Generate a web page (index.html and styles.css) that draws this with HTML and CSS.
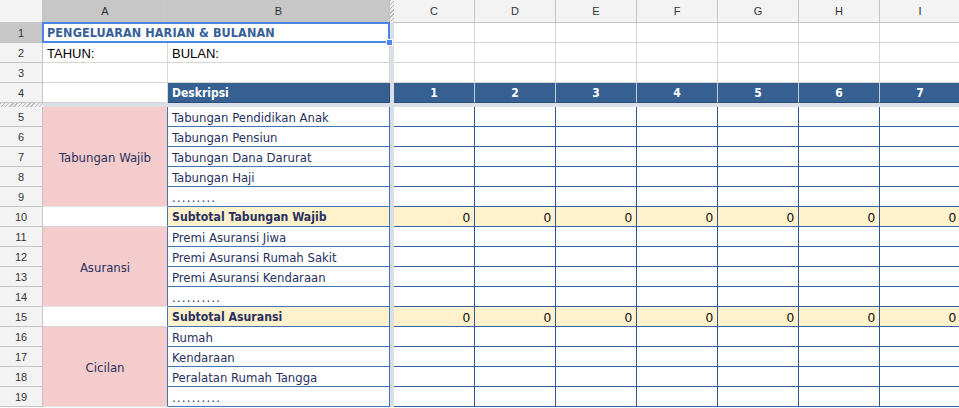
FILE: index.html
```html
<!DOCTYPE html>
<html lang="id">
<head>
<meta charset="utf-8">
<title>Pengeluaran Harian &amp; Bulanan</title>
<link rel="stylesheet" href="styles.css">
</head>
<body>
<div class="sheet">
  <!-- column headers -->
  <div class="corner"></div>
  <div class="ch sel">A</div>
  <div class="ch sel">B</div>
  <div class="fz hatch"></div>
  <div class="ch">C</div><div class="ch">D</div><div class="ch">E</div><div class="ch">F</div><div class="ch">G</div><div class="ch">H</div><div class="ch">I</div>

  <!-- row 1 -->
  <div class="rh sel">1</div>
  <div class="c title span2">PENGELUARAN HARIAN &amp; BULANAN</div>
  <div class="fz"></div>
  <div class="c"></div><div class="c"></div><div class="c"></div><div class="c"></div><div class="c"></div><div class="c"></div><div class="c"></div>

  <!-- row 2 -->
  <div class="rh">2</div>
  <div class="c plain">TAHUN:</div>
  <div class="c plain">BULAN:</div>
  <div class="fz"></div>
  <div class="c"></div><div class="c"></div><div class="c"></div><div class="c"></div><div class="c"></div><div class="c"></div><div class="c"></div>

  <!-- row 3 -->
  <div class="rh">3</div>
  <div class="c"></div>
  <div class="c"></div>
  <div class="fz"></div>
  <div class="c"></div><div class="c"></div><div class="c"></div><div class="c"></div><div class="c"></div><div class="c"></div><div class="c"></div>

  <!-- row 4 -->
  <div class="rh">4</div>
  <div class="c"></div>
  <div class="c hd">Deskripsi</div>
  <div class="fz"></div>
  <div class="c hd day">1</div><div class="c hd day">2</div><div class="c hd day">3</div><div class="c hd day">4</div><div class="c hd day">5</div><div class="c hd day">6</div><div class="c hd day">7</div>

  <!-- freeze row -->
  <div class="hatch"></div>
  <div class="frow"></div>

  <!-- rows 5-9 -->
  <div class="rh">5</div>
  <div class="c cat span5">Tabungan Wajib</div>
  <div class="c desc">Tabungan Pendidikan Anak</div>
  <div class="fz"></div>
  <div class="c n"></div><div class="c n"></div><div class="c n"></div><div class="c n"></div><div class="c n"></div><div class="c n"></div><div class="c n"></div>

  <div class="rh">6</div>
  <div class="c desc">Tabungan Pensiun</div>
  <div class="fz"></div>
  <div class="c n"></div><div class="c n"></div><div class="c n"></div><div class="c n"></div><div class="c n"></div><div class="c n"></div><div class="c n"></div>

  <div class="rh">7</div>
  <div class="c desc">Tabungan Dana Darurat</div>
  <div class="fz"></div>
  <div class="c n"></div><div class="c n"></div><div class="c n"></div><div class="c n"></div><div class="c n"></div><div class="c n"></div><div class="c n"></div>

  <div class="rh">8</div>
  <div class="c desc">Tabungan Haji</div>
  <div class="fz"></div>
  <div class="c n"></div><div class="c n"></div><div class="c n"></div><div class="c n"></div><div class="c n"></div><div class="c n"></div><div class="c n"></div>

  <div class="rh">9</div>
  <div class="c desc dots">.........</div>
  <div class="fz"></div>
  <div class="c n"></div><div class="c n"></div><div class="c n"></div><div class="c n"></div><div class="c n"></div><div class="c n"></div><div class="c n"></div>

  <!-- row 10 -->
  <div class="rh">10</div>
  <div class="c blank"></div>
  <div class="c desc subl">Subtotal Tabungan Wajib</div>
  <div class="fz"></div>
  <div class="c n sub">0</div><div class="c n sub">0</div><div class="c n sub">0</div><div class="c n sub">0</div><div class="c n sub">0</div><div class="c n sub">0</div><div class="c n sub">0</div>

  <!-- rows 11-14 -->
  <div class="rh">11</div>
  <div class="c cat span4">Asuransi</div>
  <div class="c desc">Premi Asuransi Jiwa</div>
  <div class="fz"></div>
  <div class="c n"></div><div class="c n"></div><div class="c n"></div><div class="c n"></div><div class="c n"></div><div class="c n"></div><div class="c n"></div>

  <div class="rh">12</div>
  <div class="c desc">Premi Asuransi Rumah Sakit</div>
  <div class="fz"></div>
  <div class="c n"></div><div class="c n"></div><div class="c n"></div><div class="c n"></div><div class="c n"></div><div class="c n"></div><div class="c n"></div>

  <div class="rh">13</div>
  <div class="c desc">Premi Asuransi Kendaraan</div>
  <div class="fz"></div>
  <div class="c n"></div><div class="c n"></div><div class="c n"></div><div class="c n"></div><div class="c n"></div><div class="c n"></div><div class="c n"></div>

  <div class="rh">14</div>
  <div class="c desc dots">..........</div>
  <div class="fz"></div>
  <div class="c n"></div><div class="c n"></div><div class="c n"></div><div class="c n"></div><div class="c n"></div><div class="c n"></div><div class="c n"></div>

  <!-- row 15 -->
  <div class="rh">15</div>
  <div class="c blank"></div>
  <div class="c desc subl">Subtotal Asuransi</div>
  <div class="fz"></div>
  <div class="c n sub">0</div><div class="c n sub">0</div><div class="c n sub">0</div><div class="c n sub">0</div><div class="c n sub">0</div><div class="c n sub">0</div><div class="c n sub">0</div>

  <!-- rows 16-19 -->
  <div class="rh">16</div>
  <div class="c cat span4">Cicilan</div>
  <div class="c desc">Rumah</div>
  <div class="fz"></div>
  <div class="c n"></div><div class="c n"></div><div class="c n"></div><div class="c n"></div><div class="c n"></div><div class="c n"></div><div class="c n"></div>

  <div class="rh">17</div>
  <div class="c desc">Kendaraan</div>
  <div class="fz"></div>
  <div class="c n"></div><div class="c n"></div><div class="c n"></div><div class="c n"></div><div class="c n"></div><div class="c n"></div><div class="c n"></div>

  <div class="rh">18</div>
  <div class="c desc">Peralatan Rumah Tangga</div>
  <div class="fz"></div>
  <div class="c n"></div><div class="c n"></div><div class="c n"></div><div class="c n"></div><div class="c n"></div><div class="c n"></div><div class="c n"></div>

  <div class="rh">19</div>
  <div class="c desc dots">..........</div>
  <div class="fz"></div>
  <div class="c n"></div><div class="c n"></div><div class="c n"></div><div class="c n"></div><div class="c n"></div><div class="c n"></div><div class="c n"></div>

  <!-- selection overlay -->
  <div class="selection"></div>
  <div class="handle"></div>
</div>
</body>
</html>
```

FILE: styles.css
```css
* { box-sizing: border-box; margin: 0; padding: 0; }

body {
  margin: 0;
  width: 959px;
  height: 408px;
  overflow: hidden;
  background: #ffffff;
}

.sheet {
  position: relative;
  display: grid;
  grid-template-columns: 43px 125px 222px 4px repeat(7, 81px);
  grid-template-rows: 23px repeat(4, 20px) 4px repeat(15, 20px);
  width: 961px;
}

/* headers */
.corner {
  background: #f3f3f3;
  border-right: 1px solid #c4c4c4;
  border-bottom: 1px solid #c4c4c4;
}

.ch,
.rh {
  background: #f3f3f3;
  border-right: 1px solid #c4c4c4;
  border-bottom: 1px solid #c4c4c4;
  font: 11px "Liberation Sans", Arial, sans-serif;
  color: #333333;
  display: flex;
  align-items: center;
  justify-content: center;
}

.ch.sel, .rh.sel { background: #c7c7c7; }

/* freeze bars */
.fz { background: #d9dee7; }

.hatch {
  background: repeating-linear-gradient(135deg, #bdbdbd 0 1px, #ececec 1px 3px);
}

.frow {
  grid-column: 2 / -1;
  background: #dadfe8;
}

/* cells */
.c {
  border-right: 1px solid #d6d6d6;
  border-bottom: 1px solid #d6d6d6;
  display: flex;
  align-items: center;
  padding: 1px 4px 0;
  white-space: nowrap;
  overflow: hidden;
  font: 13px "DejaVu Sans Condensed", "DejaVu Sans", sans-serif;
  color: #28305f;
}

.span2 { grid-column: span 2; }
.span4 { grid-row: span 4; }
.span5 { grid-row: span 5; }

.title {
  font-size: 12.5px;
  font-weight: bold;
  color: #35609a;
  padding-top: 0;
  letter-spacing: 0.1px;
}

.plain {
  font: 13px "Liberation Sans", Arial, sans-serif;
  color: #000000;
  align-items: flex-end;
  padding-bottom: 1px;
}

.hd {
  background: #366092;
  color: #ffffff;
  font-size: 12px;
  font-weight: bold;
  border-bottom-color: #2a4a78;
  border-right-color: #2a4a78;
}

.hd.day {
  justify-content: center;
  border-right-color: #c4cedb;
}

.cat {
  background: #f4cccc;
  justify-content: center;
  border-right-color: #4474b6;
  border-bottom-color: #e3e3e3;
}

.blank {
  border-right-color: #4474b6;
}

.desc {
  border-right-color: #4474b6;
  border-bottom-color: #4474b6;
}

.dots { letter-spacing: 1.2px; }

.subl {
  background: #fff2cc;
  font-size: 12.2px;
  font-weight: bold;
}

.n {
  border-right-color: #31558c;
  border-bottom-color: #3b62a0;
}

.sub {
  background: #fff2cc;
  justify-content: flex-end;
  align-items: flex-end;
  padding: 0 4px 1px;
  font: 13px "Liberation Sans", Arial, sans-serif;
  color: #000000;
}

/* selection overlay */
.selection {
  position: absolute;
  left: 42px;
  top: 22px;
  width: 348px;
  height: 21px;
  border: 2px solid #4a86e8;
  pointer-events: none;
}

.handle {
  position: absolute;
  left: 386px;
  top: 39px;
  width: 7px;
  height: 7px;
  background: #4a86e8;
  border: 1px solid #ffffff;
}
```
